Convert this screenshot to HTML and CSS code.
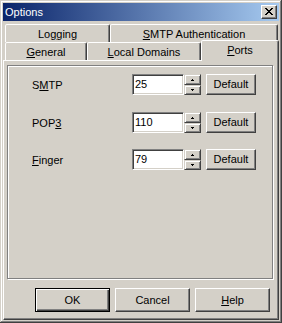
FILE: index.html
```html
<!DOCTYPE html>
<html>
<head>
<meta charset="utf-8">
<title>Options</title>
<link rel="stylesheet" href="styles.css">
</head>
<body>
<div class="window">
  <div class="titlebar">
    <span class="title">Options</span>
    <div class="close">
      <svg class="x-glyph" width="8" height="7" viewBox="0 0 8 7" shape-rendering="crispEdges">
        <path d="M0 0h2v1h1v1h2V1h1V0h2v1H7v1H6v1H5v1h1v1h1v1h1v1H6V6H5V5H3v1H2v1H0V6h1V5h1V4h1V3H2V2H1V1H0z" fill="#000"/>
      </svg>
    </div>
  </div>
  <div class="client">
    <div class="tabrow">
      <div class="tab t-logging">Lo<u>g</u>ging</div>
      <div class="tab t-smtp"><u>S</u>MTP Authentication</div>
    </div>
    <div class="tabrow">
      <div class="tab t-general"><u>G</u>eneral</div>
      <div class="tab t-local"><u>L</u>ocal Domains</div>
      <div class="tab t-ports active"><u>P</u>orts</div>
    </div>
    <div class="panel">
      <div class="group">
        <div class="row">
          <span class="label">S<u>M</u>TP</span>
          <div class="field">25</div>
          <div class="spin">
            <div class="spin-btn up"><svg width="3" height="2" viewBox="0 0 3 2" shape-rendering="crispEdges"><path d="M1 0h1v1h1v1H0V1h1z" fill="#000"/></svg></div>
            <div class="spin-btn down"><svg width="3" height="2" viewBox="0 0 3 2" shape-rendering="crispEdges"><path d="M0 0h3v1H2v1H1V1H0z" fill="#000"/></svg></div>
          </div>
          <div class="btn btn-small">Default</div>
        </div>
        <div class="row">
          <span class="label">POP<u>3</u></span>
          <div class="field">110</div>
          <div class="spin">
            <div class="spin-btn up"><svg width="3" height="2" viewBox="0 0 3 2" shape-rendering="crispEdges"><path d="M1 0h1v1h1v1H0V1h1z" fill="#000"/></svg></div>
            <div class="spin-btn down"><svg width="3" height="2" viewBox="0 0 3 2" shape-rendering="crispEdges"><path d="M0 0h3v1H2v1H1V1H0z" fill="#000"/></svg></div>
          </div>
          <div class="btn btn-small">Default</div>
        </div>
        <div class="row">
          <span class="label"><u>F</u>inger</span>
          <div class="field">79</div>
          <div class="spin">
            <div class="spin-btn up"><svg width="3" height="2" viewBox="0 0 3 2" shape-rendering="crispEdges"><path d="M1 0h1v1h1v1H0V1h1z" fill="#000"/></svg></div>
            <div class="spin-btn down"><svg width="3" height="2" viewBox="0 0 3 2" shape-rendering="crispEdges"><path d="M0 0h3v1H2v1H1V1H0z" fill="#000"/></svg></div>
          </div>
          <div class="btn btn-small">Default</div>
        </div>
      </div>
      <div class="buttons">
        <div class="btn btn-large btn-default">OK</div>
        <div class="btn btn-large">Cancel</div>
        <div class="btn btn-large"><u>H</u>elp</div>
      </div>
    </div>
  </div>
</div>
</body>
</html>
```
FILE: styles.css
```css
* { box-sizing: border-box; }
html, body { margin: 0; padding: 0; }
body {
  width: 282px;
  height: 323px;
  overflow: hidden;
  background: #D4D0C8;
  font-family: "Liberation Sans", Arial, sans-serif;
  font-size: 11px;
  color: #000;
}
u { text-decoration: underline; text-underline-offset: 1px; }

.window {
  width: 282px;
  height: 323px;
  padding: 3px;
  background: #D4D0C8;
  box-shadow: inset -1px -1px #404040, inset 1px 1px #D4D0C8, inset -2px -2px #808080, inset 2px 2px #fff;
  display: flex;
  flex-direction: column;
}

.titlebar {
  height: 18px;
  flex: none;
  display: flex;
  align-items: center;
  justify-content: space-between;
  padding: 0 2px 0 2px;
  background: linear-gradient(to right, #0A246A, #A6CAF0);
  color: #fff;
  line-height: 13px;
}
.title { padding-top: 1px; }
.close {
  width: 16px;
  height: 14px;
  background: #D4D0C8;
  border: 1px solid;
  border-color: #fff #404040 #404040 #fff;
  box-shadow: inset -1px -1px #808080;
  padding: 2px 0 0 3px;
}
.x-glyph { display: block; }

.client {
  flex: 1;
  display: flex;
  flex-direction: column;
  padding-top: 3px;
}

.tabrow {
  display: flex;
  height: 18px;
  flex: none;
  padding-left: 2px;
}
.tab {
  height: 18px;
  flex: none;
  background: #D4D0C8;
  border: 1px solid;
  border-bottom: 0;
  border-color: #fff #404040 transparent #fff;
  border-radius: 2px 2px 0 0;
  box-shadow: inset -1px 0 #808080;
  text-align: center;
  padding-top: 3px;
  line-height: 13px;
  white-space: nowrap;
}
.t-logging { width: 105px; }
.t-smtp { width: 168px; }
.t-general { width: 82px; }
.t-local { width: 114px; }
.t-ports { width: 78px; }
.tab.active {
  height: 21px;
  margin-top: -2px;
  position: relative;
  z-index: 2;
}

.panel {
  flex: 1;
  width: 276px;
  border: 1px solid;
  border-color: #fff #404040 #404040 #fff;
  box-shadow: inset -1px -1px #808080;
  padding: 4px 4px 0 3px;
  display: flex;
  flex-direction: column;
}

.group {
  width: 266px;
  height: 214px;
  flex: none;
  border: 1px solid #808080;
  box-shadow: inset 1px 1px #fff, 1px 1px #fff;
  padding: 8px 0 0 24px;
}

.row {
  display: flex;
  align-items: center;
  height: 21px;
}
.row + .row { margin-top: 17px; }
.row:last-child { margin-top: 16px; }
.label { width: 100px; padding-top: 1px; }

.field {
  width: 52px;
  height: 21px;
  background: #fff;
  border: 1px solid;
  border-color: #808080 #fff #fff #808080;
  box-shadow: inset 1px 1px #404040, inset -1px -1px #D4D0C8;
  padding: 2px 0 0 2px;
  line-height: 14px;
}

.spin {
  width: 17px;
  height: 21px;
  display: flex;
  flex-direction: column;
}
.spin-btn {
  flex: none;
  background: #D4D0C8;
  border: 1px solid;
  border-color: #D4D0C8 #404040 #404040 #D4D0C8;
  box-shadow: inset 1px 1px #fff, inset -1px -1px #808080;
  display: flex;
  align-items: center;
  justify-content: center;
}
.spin-btn svg { display: block; }
.spin-btn.up { height: 11px; }
.spin-btn.down { height: 10px; }

.btn {
  background: #D4D0C8;
  border: 1px solid;
  border-color: #fff #404040 #404040 #fff;
  box-shadow: inset -1px -1px #808080;
  display: flex;
  align-items: center;
  justify-content: center;
  line-height: 13px;
}
.btn-small {
  width: 50px;
  height: 21px;
  margin-left: 5px;
}

.buttons {
  display: flex;
  gap: 5px;
  margin-top: 9px;
  padding-left: 28px;
}
.btn-large {
  width: 75px;
  height: 24px;
}
.btn-default {
  border-color: #000;
  box-shadow: inset 1px 1px #fff, inset -1px -1px #404040, inset -2px -2px #808080;
}
```
